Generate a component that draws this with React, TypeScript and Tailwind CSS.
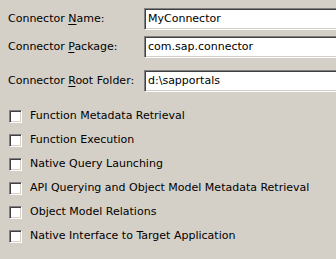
import React from "react"

// Form fields
const fields = [
  { pre: "Connector ", key: "N", post: "ame:", value: "MyConnector" },
  { pre: "Connector ", key: "P", post: "ackage:", value: "com.sap.connector" },
  { pre: "Connector ", key: "R", post: "oot Folder:", value: "d:\\sapportals" },
]

const options = [
  "Function Metadata Retrieval",
  "Function Execution",
  "Native Query Launching",
  "API Querying and Object Model Metadata Retrieval",
  "Object Model Relations",
  "Native Interface to Target Application",
]

function Field({ pre, k, post, value, className }: { pre: string; k: string; post: string; value: string; className: string }) {
  return (
    <div className={`flex items-center ${className}`}>
      <label className="w-[144px] shrink-0 pl-2">
        {pre}
        <span className="underline underline-offset-2">{k}</span>
        {post}
      </label>
      <div className="h-[22px] flex-1 border border-t-[#808080] border-l-[#808080] border-b-white border-r-0 shadow-[inset_1px_1px_0_#404040,inset_0_-1px_0_#d4d0c8] bg-white flex items-center pl-[3px] -mr-2">
        {value}
      </div>
    </div>
  )
}

export default function App() {
  return (
    <div
      className="w-[336px] h-[259px] overflow-hidden bg-[#d4d0c8] text-[11px] text-black"
      style={{ fontFamily: '"DejaVu Sans", sans-serif' }}
    >
      <div className="pt-2">
        <Field pre={fields[0].pre} k={fields[0].key} post={fields[0].post} value={fields[0].value} className="" />
        <Field pre={fields[1].pre} k={fields[1].key} post={fields[1].post} value={fields[1].value} className="mt-[6px]" />
        <Field pre={fields[2].pre} k={fields[2].key} post={fields[2].post} value={fields[2].value} className="mt-[12px]" />
      </div>

      {/* Checkbox list */}
      <div className="flex flex-col pl-[9px] pt-[18px] gap-[11px]">
        {options.map((opt) => (
          <div key={opt} className="flex items-center gap-2 h-[13px]">
            <span className="w-[13px] h-[13px] shrink-0 bg-white border border-t-[#808080] border-l-[#808080] border-b-white border-r-white shadow-[inset_1px_1px_0_#404040,inset_-1px_-1px_0_#d4d0c8]" />
            <span>{opt}</span>
          </div>
        ))}
      </div>
    </div>
  )
}
